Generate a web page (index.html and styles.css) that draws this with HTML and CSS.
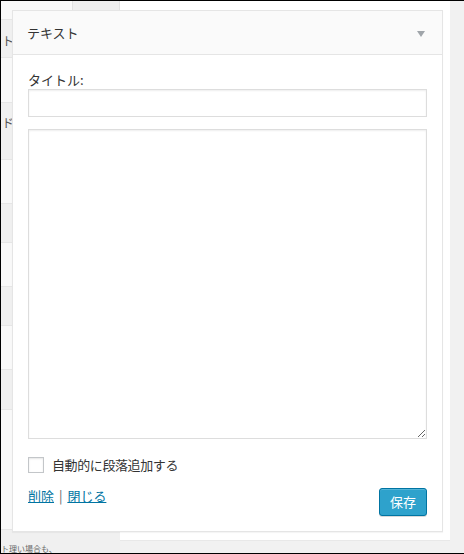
FILE: index.html
```html
<!DOCTYPE html>
<html lang="ja">
<head>
<meta charset="utf-8">
<title>テキスト</title>
<link rel="stylesheet" href="styles.css">
</head>
<body>
<div class="screen">
  <div class="backdrop">
    <div class="sidebar">
      <div class="tabs"><span class="tab-a"></span><span class="tab-b"></span></div>
      <div class="row light h10"></div>
      <div class="row gray h38"><span class="frag">ト-リ</span></div>
      <div class="row light h45"></div>
      <div class="row gray h57"><span class="frag frag2">ド-</span></div>
      <div class="row light h44"></div>
      <div class="row gray h39"></div>
      <div class="row light h44"></div>
      <div class="row gray h39"></div>
      <div class="row light h44"></div>
      <div class="row gray h40"></div>
      <div class="row light h120"></div>
      <div class="row gray grow"><span class="bottom-frag">ト理い場合も、</span></div>
    </div>
    <div class="panel"></div>
  </div>

  <div class="widget">
    <div class="widget-top">
      <h3 class="widget-title">テキスト</h3>
      <span class="toggle"></span>
    </div>
    <div class="widget-inside">
      <label class="field-label" for="title">タイトル:</label>
      <input class="field-input" id="title" type="text">
      <textarea class="field-text"></textarea>
      <div class="check-row">
        <span class="checkbox"></span>
        <span class="check-label">自動的に段落追加する</span>
      </div>
      <div class="actions">
        <div class="links"><a href="#">削除</a> <span class="sep">|</span> <a href="#">閉じる</a></div>
        <button class="save" type="button">保存</button>
      </div>
    </div>
  </div>
</div>
</body>
</html>
```

FILE: styles.css
```css
* { box-sizing: border-box; }
html, body { margin: 0; padding: 0; }
body {
  font-family: "Noto Sans CJK JP", "Noto Sans", sans-serif;
  font-size: 13px;
  color: #222;
  background: #f1f1f1;
}
.screen {
  position: relative;
  width: 464px;
  height: 554px;
  border-top: 1px solid #000;
  border-left: 1px solid #000;
  border-bottom: 1px solid #000;
  background: #f1f1f1;
  overflow: hidden;
}
.backdrop {
  display: flex;
  height: 100%;
}
.sidebar {
  width: 119px;
  display: flex;
  flex-direction: column;
  height: 100%;
}
.tabs { display: flex; height: 9px; flex: none; }
.tab-a { width: 71px; background: #f9f9f9; }
.tab-b { width: 48px; background: #efefef; border-left: 1px solid #e2e2e2; border-right: 1px solid #e2e2e2; }
.row { flex: none; position: relative; overflow: hidden; border-bottom: 1px solid #e6e6e6; }
.light { background: #f9f9f9; }
.gray { background: #f0f0f0; }
.h10 { height: 10px; }
.h38 { height: 38px; }
.h39 { height: 39px; }
.h40 { height: 40px; }
.h44 { height: 44px; }
.h45 { height: 45px; }
.h57 { height: 57px; }
.h120 { height: 120px; }
.grow { flex: 1; border-bottom: 0; }
.frag {
  display: block;
  font-size: 12px;
  color: #555;
  padding: 12px 0 0 1px;
  white-space: nowrap;
}
.frag2 { padding-top: 11px; }
.bottom-frag {
  position: absolute;
  left: 0;
  bottom: 0;
  font-size: 8px;
  line-height: 9px;
  color: #666;
  white-space: nowrap;
}
.panel {
  width: 330px;
  height: 540px;
  background: #fff;
  border-bottom: 1px solid #e8e8e8;
}

/* widget overlay */
.widget {
  position: absolute;
  left: 11px;
  top: 9px;
  width: 431px;
  background: #fff;
  border: 1px solid #e5e5e5;
  box-shadow: 0 1px 1px rgba(0,0,0,0.04);
}
.widget-top {
  height: 44px;
  background: #fafafa;
  border-bottom: 1px solid #e5e5e5;
  display: flex;
  align-items: center;
  justify-content: space-between;
  padding: 0 17px 0 14px;
}
.widget-title {
  margin: 0;
  font-size: 13px;
  font-weight: normal;
  color: #333;
  line-height: 18px;
}
.toggle {
  width: 0;
  height: 0;
  border-left: 4px solid transparent;
  border-right: 4px solid transparent;
  border-top: 6px solid #a0a5aa;
  margin-top: 2px;
}
.widget-inside {
  padding: 16px 15px 15px 15px;
}
.field-label {
  display: block;
  line-height: 18px;
  color: #333;
}
.field-input {
  display: block;
  width: 100%;
  height: 28px;
  margin: 0;
  border: 1px solid #ddd;
  box-shadow: inset 0 1px 2px rgba(0,0,0,0.07);
  background: #fff;
  font: inherit;
}
.field-text {
  display: block;
  width: 100%;
  height: 310px;
  margin: 12px 0 0 0;
  border: 1px solid #ddd;
  box-shadow: inset 0 1px 2px rgba(0,0,0,0.07);
  background: #fff;
  font: inherit;
  resize: both;
}
.check-row {
  display: flex;
  align-items: center;
  gap: 8px;
  margin-top: 18px;
  height: 16px;
}
.checkbox {
  width: 16px;
  height: 16px;
  border: 1px solid #c3c6c9;
  box-shadow: inset 0 1px 2px rgba(0,0,0,0.1);
  background: #fff;
}
.check-label {
  color: #333;
  line-height: 18px;
  letter-spacing: -0.4px;
}
.actions {
  display: flex;
  justify-content: space-between;
  align-items: flex-start;
  margin-top: 15px;
}
.links {
  line-height: 16px;
  color: #555;
}
.links a {
  color: #0074a2;
  text-decoration: underline;
}
.sep { color: #666; padding: 0 2px; }
.save {
  width: 48px;
  height: 28px;
  margin: 0;
  padding: 0;
  border: 1px solid #0074a2;
  border-radius: 3px;
  background: #2ea2cc;
  box-shadow: inset 0 1px 0 rgba(120,200,230,0.5), 0 1px 0 rgba(0,0,0,0.15);
  color: #fff;
  font-family: inherit;
  font-size: 13px;
  line-height: 26px;
}
```
